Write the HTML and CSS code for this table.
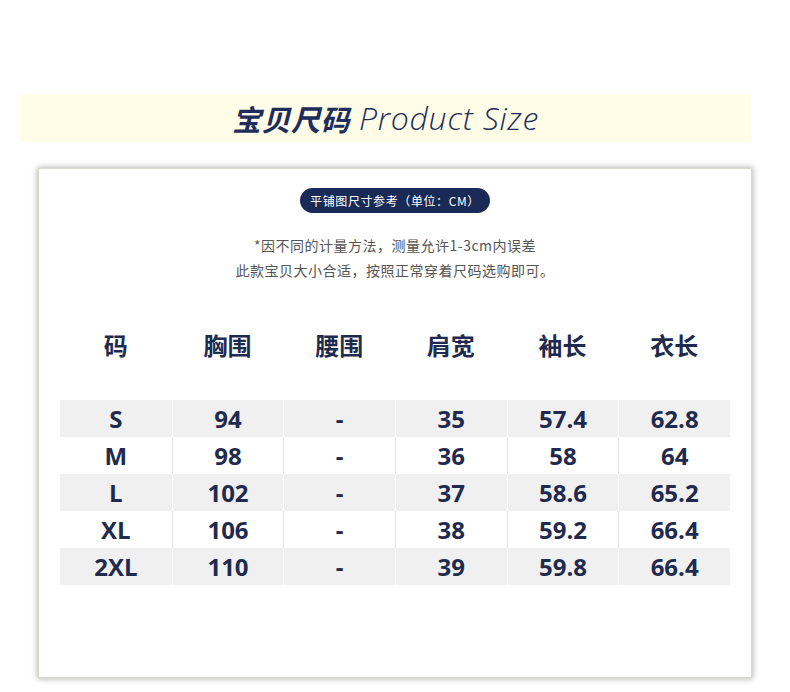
FILE: index.html
```html
<!DOCTYPE html>
<html lang="zh-CN">
<head>
<meta charset="utf-8">
<title>宝贝尺码 Product Size</title>
<link rel="stylesheet" href="styles.css">
</head>
<body>
<div class="page">
  <div class="banner">
    <span class="title-cn">宝贝尺码</span>
    <span class="title-en">Product Size</span>
  </div>
  <div class="card">
    <div class="badge">平铺图尺寸参考（单位：CM）</div>
    <div class="notes">
      <p>*因不同的计量方法，测量允许1-3cm内误差</p>
      <p>此款宝贝大小合适，按照正常穿着尺码选购即可。</p>
    </div>
    <div class="table">
      <div class="head">
        <div>码</div><div>胸围</div><div>腰围</div><div>肩宽</div><div>袖长</div><div>衣长</div>
      </div>
      <div class="row shade">
        <div>S</div><div>94</div><div>-</div><div>35</div><div>57.4</div><div>62.8</div>
      </div>
      <div class="row">
        <div>M</div><div>98</div><div>-</div><div>36</div><div>58</div><div>64</div>
      </div>
      <div class="row shade">
        <div>L</div><div>102</div><div>-</div><div>37</div><div>58.6</div><div>65.2</div>
      </div>
      <div class="row">
        <div>XL</div><div>106</div><div>-</div><div>38</div><div>59.2</div><div>66.4</div>
      </div>
      <div class="row shade">
        <div>2XL</div><div>110</div><div>-</div><div>39</div><div>59.8</div><div>66.4</div>
      </div>
    </div>
  </div>
</div>
</body>
</html>
```
FILE: styles.css
```css
html, body {
  margin: 0;
  padding: 0;
  background: #ffffff;
}

body {
  font-family: "Open Sans", "Noto Sans CJK SC", sans-serif;
  color: #1f2a4f;
}

.page {
  padding-top: 94px;
  width: 790px;
  height: 692px;
  box-sizing: border-box;
  overflow: hidden;
}

.banner {
  margin-left: 20px;
  width: 731px;
  height: 48px;
  background: #fffde7;
  display: flex;
  align-items: center;
  justify-content: center;
  gap: 9px;
}

.title-cn {
  font-family: "Noto Sans CJK SC", sans-serif;
  font-weight: 700;
  font-style: italic;
  font-size: 29px;
  line-height: 1;
  color: #202d5c;
  letter-spacing: 0.5px;
}

.title-en {
  font-family: "Open Sans", sans-serif;
  font-weight: 300;
  font-style: italic;
  font-size: 32px;
  line-height: 1;
  color: #202d5c;
  letter-spacing: 0.8px;
}

.card {
  margin: 26px 0 0 38px;
  width: 714px;
  height: 510px;
  box-sizing: border-box;
  border: 1px solid #d8d8cc;
  background: #ffffff;
  box-shadow: 0 0 6px 1px rgba(0, 0, 0, 0.28);
  padding: 19px 21px 0;
}

.badge {
  width: 190px;
  height: 25px;
  margin: 0 auto;
  border-radius: 13px;
  background: #182a55;
  color: #ffffff;
  font-family: "Noto Sans CJK SC", sans-serif;
  font-size: 12px;
  letter-spacing: 0.6px;
  line-height: 25px;
  text-align: center;
}

.notes {
  margin-top: 20px;
  text-align: center;
  color: #555555;
  font-family: "Noto Sans CJK SC", sans-serif;
  font-size: 14px;
  letter-spacing: 0.5px;
  line-height: 25px;
}

.notes p {
  margin: 0;
}

.table {
  margin-top: 42px;
}

.head,
.row {
  display: grid;
  grid-template-columns: repeat(6, 1fr);
  text-align: center;
  font-weight: 700;
}

.head {
  height: 40px;
  line-height: 40px;
  font-family: "Noto Sans CJK SC", sans-serif;
  font-size: 24px;
  margin-bottom: 35px;
}

.row {
  height: 37px;
  line-height: 37px;
  font-size: 24px;
}

.row > div + div {
  border-left: 1px solid #e3e3e3;
}

.row.shade {
  background: #f0f0f0;
}

.row.shade > div + div {
  border-left-color: #ffffff;
}
```
